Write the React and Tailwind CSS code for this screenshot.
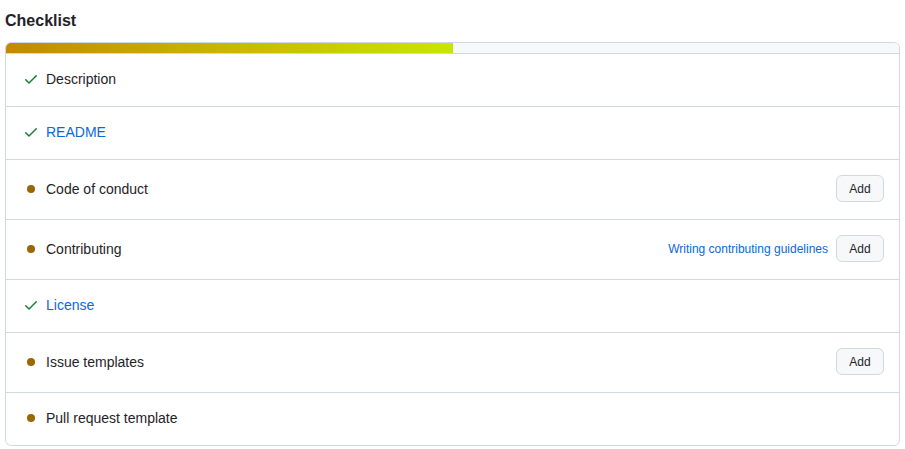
import React from "react";

const items = [
  { label: "Description", done: true },
  { label: "README", done: true, link: true },
  { label: "Code of conduct", done: false, add: true },
  { label: "Contributing", done: false, add: true, guide: "Writing contributing guidelines" },
  { label: "License", done: true, link: true },
  { label: "Issue templates", done: false, add: true },
  { label: "Pull request template", done: false },
];

function Check() {
  return (
    <svg viewBox="0 0 16 16" width="16" height="16" className="fill-[#1a7f37]">
      <path d="M13.78 4.22a.75.75 0 0 1 0 1.06l-7.25 7.25a.75.75 0 0 1-1.06 0L2.22 9.28a.751.751 0 0 1 .018-1.042.751.751 0 0 1 1.042-.018L6 10.94l6.72-6.72a.75.75 0 0 1 1.06 0Z" />
    </svg>
  );
}

export default function App() {
  return (
    <div className="bg-white min-h-screen px-[5px] pt-[9px] font-['Liberation_Sans',Arial,sans-serif] text-[#1f2328]">
      <h2 className="text-[16px] font-bold leading-6 mb-[9px]">Checklist</h2>
      <div className="border border-[#d1d9e0] rounded-md overflow-hidden">
        <div className="h-[11px] bg-[#f6f8fa] border-b border-[#d1d9e0]">
          <div className="h-full w-1/2 bg-gradient-to-r from-[#c18a00] to-[#c8e600]" />
        </div>
        {items.map((it, i) => (
          <div
            key={it.label}
            className={`flex items-center pt-[15px] pb-[17px] pl-[17px] pr-[15px] ${i > 0 ? "border-t border-[#d1d9e0]" : ""}`}
          >
            <div className="w-4 h-5 flex items-center justify-center mr-[7px]">
              {it.done ? <Check /> : <span className="block w-2 h-2 rounded-full bg-[#9a6700]" />}
            </div>
            <span className={`text-[14px] leading-5 ${it.link ? "text-[#0969da]" : ""}`}>{it.label}</span>
            <div className="ml-auto flex items-center gap-2">
              {it.guide && <span className="text-[12px] text-[#0969da]">{it.guide}</span>}
              {it.add && (
                <button className="h-[27px] w-[48px] rounded-md border border-[#d1d9e0] bg-[#f6f8fa] text-[12px] font-medium">
                  Add
                </button>
              )}
            </div>
          </div>
        ))}
      </div>
    </div>
  );
}
